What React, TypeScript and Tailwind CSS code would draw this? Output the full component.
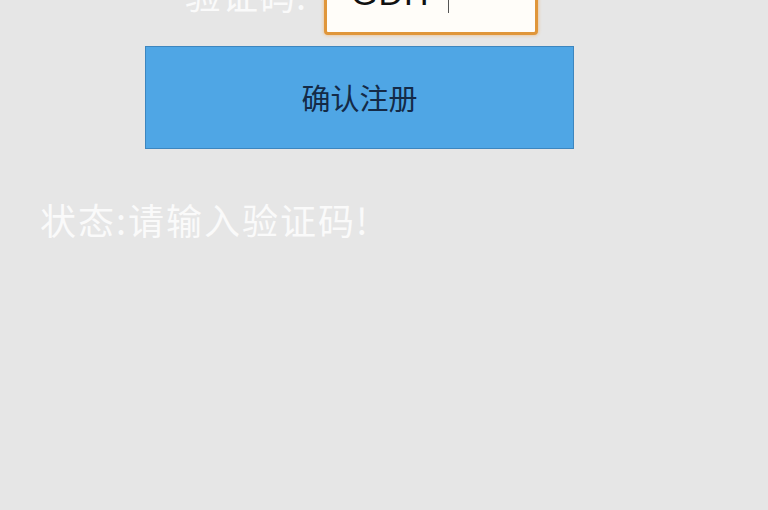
export default function App() {
  return (
    <div className="h-[510px] w-full overflow-hidden bg-[#e6e6e6] font-['Noto_Sans_CJK_SC',sans-serif]">
      {/* captcha row, scrolled partly out of view */}
      <div className="-mt-[48px] flex items-center pl-[185px]">
        <span className="text-[36px] leading-none tracking-[1px] text-[#fafafa]">验证码:</span>
        <div className="ml-[17px] flex h-[83px] w-[214px] items-center rounded-[4px] border-[3px] border-[#e0963a] bg-[#fffdf9] pl-[24px] shadow-[0_0_3px_1px_rgba(240,170,90,0.45)]">
          <span className="font-['Liberation_Sans',sans-serif] text-[34px] leading-[39px] tracking-[1px] text-[#111]">GDH</span>
          <span className="ml-[18px] h-[39px] w-[1.5px] bg-[#555]" />
        </div>
      </div>

      <button className="ml-[145px] mt-[11px] flex h-[103px] w-[429px] items-center justify-center border border-[#3d86bf] bg-[#4fa6e5] text-[29px] leading-none text-[#142a47]">
        确认注册
      </button>

      <p className="ml-[40px] mt-[52px] text-[36px] leading-none tracking-[2px] text-[#fafafa]">状态:请输入验证码!</p>
    </div>
  );
}
